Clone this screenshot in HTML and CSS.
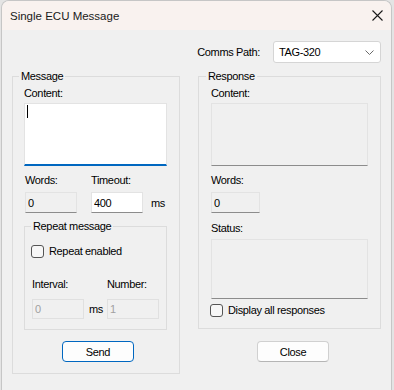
FILE: index.html
```html
<!DOCTYPE html>
<html lang="en">
  <head>
    <meta name="viewport" content="width=device-width, initial-scale=1.0">
    <title>Single ECU Message</title>
    <link rel="stylesheet" href="styles.css">
  </head>
  <body>

  <div class="dialog">
      <div class="titlebar">
          <span class="title">Single ECU Message</span>
          <svg class="close-x" width="11" height="11" viewBox="0 0 11 11">
              <path d="M0.5 0.5 L10.5 10.5 M10.5 0.5 L0.5 10.5" stroke="#1a1a1a" stroke-width="1.1" fill="none"/>
          </svg>
      </div>

      <div class="content">
          <div class="path-row">
              <span>Comms Path:</span>
              <div class="combo">
                  <span>TAG-320</span>
                  <svg width="9" height="5" viewBox="0 0 9 5">
                      <path d="M0.5 0.5 L4.5 4.5 L8.5 0.5" stroke="#6a6a6a" stroke-width="1" fill="none"/>
                  </svg>
              </div>
          </div>

          <div class="columns">
              <!-- Message -->
              <fieldset class="group group-msg">
                  <legend>Message</legend>
                  <span class="label first">Content:</span>
                  <div class="memo focused"><span class="caret"></span></div>

                  <div class="fields">
                      <div class="field words">
                          <span class="label">Words:</span>
                          <input type="text" class="box" value="0" readonly>
                      </div>
                      <div class="field">
                          <span class="label">Timeout:</span>
                          <div class="inline">
                              <input type="text" class="box white" value="400">
                              <span>ms</span>
                          </div>
                      </div>
                  </div>

                  <fieldset class="group repeat">
                      <legend>Repeat message</legend>
                      <label class="check-row">
                          <span class="check"></span>
                          <span>Repeat enabled</span>
                      </label>
                      <div class="fields repeat-fields">
                          <div class="field interval">
                              <span class="label">Interval:</span>
                              <div class="inline">
                                  <input type="text" class="box off" value="0" disabled>
                                  <span>ms</span>
                              </div>
                          </div>
                          <div class="field">
                              <span class="label">Number:</span>
                              <input type="text" class="box off" value="1" disabled>
                          </div>
                      </div>
                  </fieldset>

                  <button class="btn default send">Send</button>
              </fieldset>

              <!-- Response -->
              <div class="right-col">
                  <fieldset class="group group-resp">
                      <legend>Response</legend>
                      <span class="label first">Content:</span>
                      <div class="memo resp-memo"></div>

                      <span class="label words-label">Words:</span>
                      <input type="text" class="box resp-words" value="0" readonly>

                      <span class="label status-label">Status:</span>
                      <div class="memo status-memo"></div>

                      <label class="check-row display-row">
                          <span class="check"></span>
                          <span>Display all responses</span>
                      </label>
                  </fieldset>

                  <button class="btn close">Close</button>
              </div>
          </div>
      </div>
  </div>

  </body>
</html>
```
FILE: styles.css
```css
/* page + window frame */
html, body {
    margin: 0;
    height: 100%;
}
body {
    background-color: #e4e4e4;
    font-family: "Liberation Sans", Arial, sans-serif;
    font-size: 11px;
    letter-spacing: -0.35px;
    color: #000;
    overflow: hidden;
}
* {
    box-sizing: border-box;
}

.dialog {
    margin-left: 1px;
    width: 391px;
    height: 390px;
    border: 1px solid #c6c6c6;
    border-bottom: none;
    border-radius: 8px 8px 0 0;
    background-color: #f0f0f0;
    overflow: hidden;
}

/* title bar */
.titlebar {
    height: 29px;
    background-color: #f9f2ef;
    display: flex;
    align-items: center;
    justify-content: space-between;
    padding: 0 8px;
}
.title {
    font-size: 11.5px;
    letter-spacing: 0;
    color: #1a1a1a;
}
.close-x {
    display: block;
}

/* body */
.content {
    padding: 11px 10px 0 10px;
}
.path-row {
    display: flex;
    justify-content: flex-end;
    align-items: center;
    gap: 13px;
}
.combo {
    width: 108px;
    height: 22px;
    border: 1px solid #d5d5d5;
    border-radius: 3px;
    background-color: #fff;
    display: flex;
    align-items: center;
    justify-content: space-between;
    padding: 0 6px 0 5px;
}

.columns {
    display: grid;
    grid-template-columns: 168px 183px;
    column-gap: 18px;
    margin-top: 6px;
    align-items: start;
}

/* group boxes */
fieldset.group {
    margin: 0;
    min-width: 0;
    border: 1px solid #dcdcdc;
}
legend {
    padding: 0 2px;
    line-height: 14px;
}
.group-msg {
    padding: 0 11px 11px 11px;
}
.group-msg > legend {
    margin-left: -5px;
}
.group-resp {
    padding: 0 12px 11px 12px;
}
.group-resp > legend {
    margin-left: -5px;
}
fieldset.repeat {
    width: 143px;
    margin-top: 6px;
    padding: 0 6px 10px 6px;
}

.label {
    display: block;
    line-height: 14px;
}
.label.first {
    margin-top: 3px;
}

/* edit boxes */
.memo {
    margin-top: 3px;
    height: 63px;
    border: 1px solid #e3e3e3;
    border-bottom-color: #8c8c8c;
    background-color: #f0f0f0;
}
.memo.focused {
    width: 143px;
    background-color: #fff;
    border-bottom: 2px solid #0067c0;
    padding: 1px 0 0 2px;
}
.caret {
    display: block;
    width: 1px;
    height: 13px;
    background-color: #000;
}
.resp-memo, .status-memo {
    width: 157px;
}

.box {
    height: 21px;
    width: 52px;
    margin: 0;
    border: 1px solid #e3e3e3;
    border-bottom-color: #8c8c8c;
    border-radius: 0;
    background-color: #f0f0f0;
    padding: 0 2px;
    font: inherit;
    letter-spacing: inherit;
    color: #000;
    outline: none;
}
.box.white {
    background-color: #fff;
}
.box.off {
    height: 20px;
    border-color: #e0e0e0;
    color: #a0a0a0;
}

.fields {
    display: flex;
    margin-top: 7px;
}
.field {
    display: flex;
    flex-direction: column;
    gap: 5px;
}
.words {
    width: 66px;
    margin-left: 1px;
}
.inline {
    display: flex;
    align-items: center;
    gap: 8px;
}

.repeat-fields {
    margin-top: 19px;
    margin-left: 1px;
}
.repeat-fields .field {
    gap: 8px;
}
.interval {
    width: 75px;
}
.interval .inline {
    gap: 5px;
}

/* check boxes */
.check-row {
    display: flex;
    align-items: center;
    gap: 5px;
    line-height: 14px;
    margin-top: 11px;
}
.check {
    width: 13px;
    height: 13px;
    border: 1px solid #555;
    border-radius: 3px;
    background-color: #f7f7f7;
}
.display-row {
    margin-top: 4px;
    margin-left: -1px;
}

.words-label {
    margin-top: 7px;
}
.resp-words {
    width: 49px;
    margin-top: 5px;
    display: block;
}
.status-label {
    margin-top: 8px;
}
.status-memo {
    margin-top: 4px;
    height: 60px;
}

/* buttons */
.btn {
    display: block;
    width: 72px;
    height: 21px;
    padding: 0;
    font: inherit;
    letter-spacing: inherit;
    color: #000;
    background-color: #fdfdfd;
    border: 1px solid #d0d0d0;
    border-bottom-color: #b5b5b5;
    border-radius: 4px;
}
.btn.default {
    border: 1px solid #0067c0;
}
.send {
    margin: 11px 0 0 38px;
}
.close {
    margin: 12px 0 0 59px;
}
```
